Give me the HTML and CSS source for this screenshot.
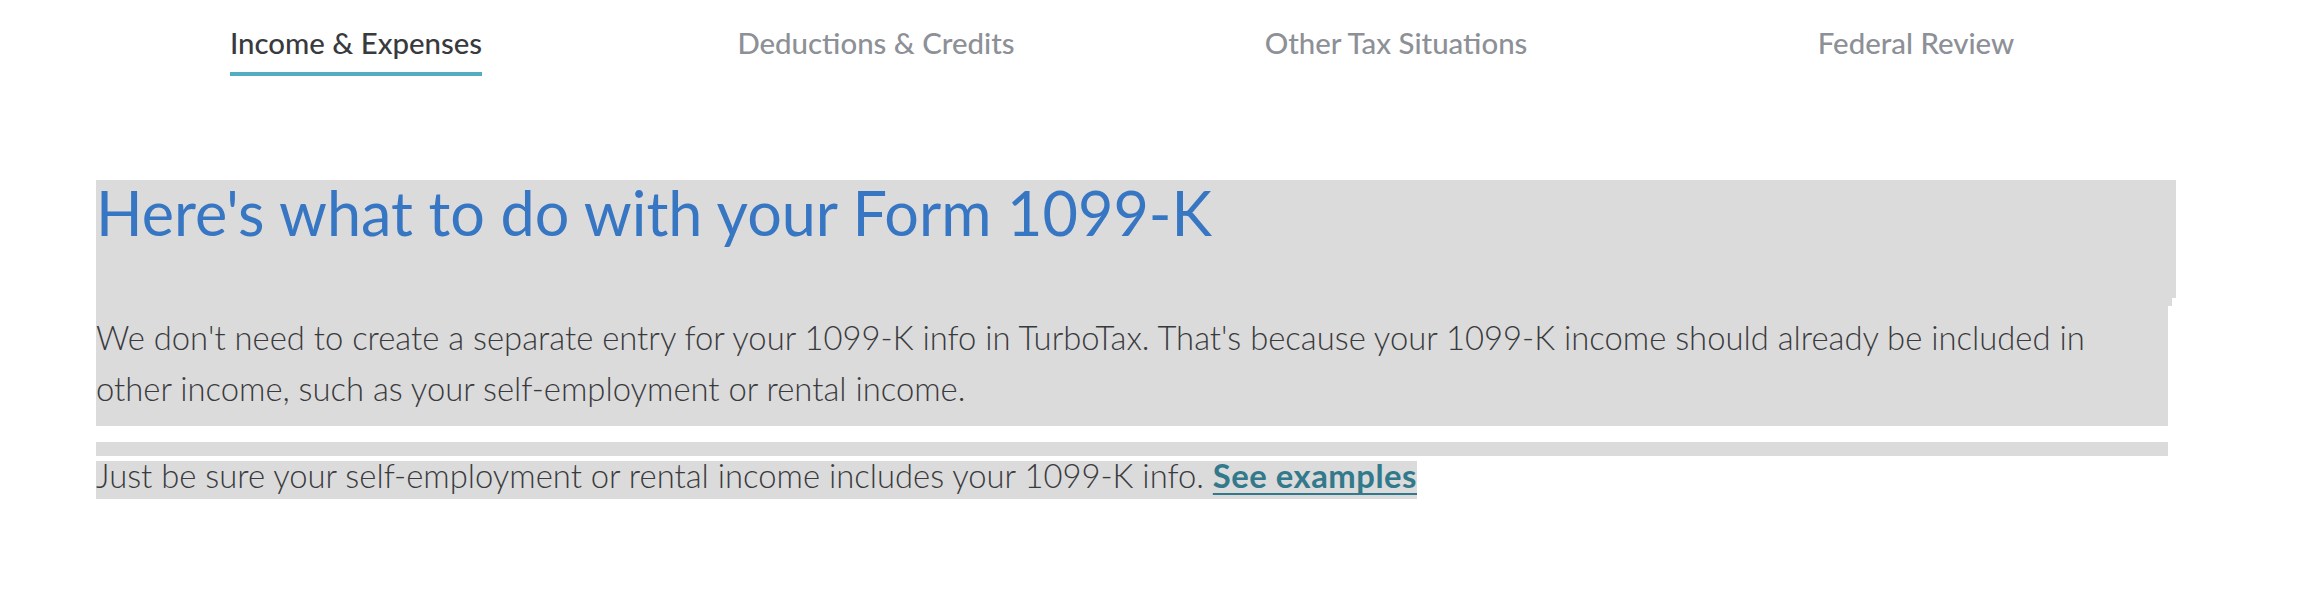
FILE: index.html
```html
<!DOCTYPE html>
<html lang="en">
<head>
    <meta charset="UTF-8">
    <meta name="viewport" content="width=device-width, initial-scale=1.0">
    <title>Form 1099-K</title>
    <link rel="stylesheet" href="styles.css">
</head>
<body>
    <div class="page">
        <!-- Progress tabs -->
        <nav class="tabs">
            <div class="tab"><span class="tab-label active">Income &amp; Expenses</span></div>
            <div class="tab"><span class="tab-label">Deductions &amp; Credits</span></div>
            <div class="tab"><span class="tab-label">Other Tax Situations</span></div>
            <div class="tab"><span class="tab-label">Federal Review</span></div>
        </nav>

        <!-- Selected content -->
        <section class="content">
            <h1 class="title">Here's what to do with your Form 1099-K</h1>
            <div class="step"></div>
            <p class="copy">We don't need to create a separate entry for your 1099-K info in TurboTax. That's because your 1099-K income should already be included in other income, such as your self-employment or rental income.</p>
            <div class="strip"></div>
            <p class="note"><span class="note-text">Just be sure your self-employment or rental income includes your 1099-K info. <a href="#" class="link">See examples</a></span></p>
        </section>
    </div>
</body>
</html>
```
FILE: styles.css
```css
body {
    margin: 0;
    background: #fff;
    font-family: Lato, "Open Sans", sans-serif;
    color: #393a3d;
}
.page {
    width: 2080px;
    margin-left: 96px;
}
.tabs {
    display: grid;
    grid-template-columns: repeat(4, 1fr);
    padding-top: 25px;
}
.tab { text-align: center; }
.tab-label {
    display: inline-block;
    font-size: 29.4px;
    font-weight: 500;
    line-height: 36px;
    color: #8d9096;
    padding-bottom: 11px;
    border-bottom: 4px solid transparent;
}
.tab-label.active {
    color: #393a3d;
    border-bottom-color: #53adc0;
}
.content { margin-top: 104px; }
.title {
    margin: 0;
    padding: 0 0 52px;
    background: #dbdbdb;
    color: #3776c3;
    font-size: 61.1px;
    font-weight: 400;
    line-height: 66px;
}
.step {
    height: 8px;
    margin-right: 4px;
    background: #dbdbdb;
}
.copy {
    margin: 0 8px 16px 0;
    padding: 6px 40px 12px 0;
    background: #dbdbdb;
    font-size: 32.8px;
    font-weight: 300;
    line-height: 51px;
}
.strip {
    height: 14px;
    margin-right: 8px;
    background: #dbdbdb;
}
.note {
    margin: 0;
    font-size: 32.8px;
    font-weight: 300;
}
.note-text {
    display: inline-block;
    line-height: 30px;
    padding-bottom: 8px;
    background: #dbdbdb;
}
.link {
    color: #32798b;
    font-weight: 700;
    letter-spacing: 0.5px;
    text-decoration: underline;
    text-underline-offset: 5px;
    text-decoration-thickness: 2px;
}
```
